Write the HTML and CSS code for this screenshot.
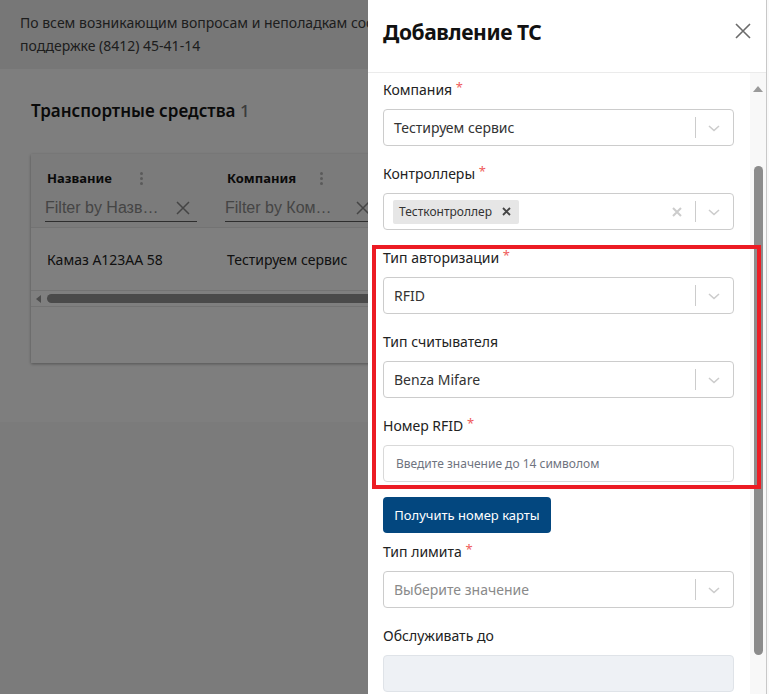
FILE: index.html
```html
<!DOCTYPE html>
<html>
<head>
  <meta charset="utf-8">
  <link rel="stylesheet" href="styles.css">
</head>
<body>
  <div class="page">
    <div class="notice">
      По всем возникающим вопросам и неполадкам сообщайте<br>
      поддержке (8412) 45-41-14
    </div>

    <main class="content">
      <h2 class="page-title">Транспортные средства <span class="count">1</span></h2>

      <div class="grid-card">
        <div class="grid-head">
          <div class="grid-col">
            <div class="col-title"><span>Название</span><span class="col-menu"><i></i><i></i><i></i></span></div>
            <div class="col-filter"><span>Filter by Назв…</span><svg class="filter-clear" width="14" height="14" viewBox="0 0 14 14"><path d="M1 1l12 12M13 1L1 13" stroke="#8a8a8a" stroke-width="1.5" fill="none"/></svg></div>
          </div>
          <div class="grid-col">
            <div class="col-title"><span>Компания</span><span class="col-menu"><i></i><i></i><i></i></span></div>
            <div class="col-filter"><span>Filter by Ком…</span><svg class="filter-clear" width="14" height="14" viewBox="0 0 14 14"><path d="M1 1l12 12M13 1L1 13" stroke="#8a8a8a" stroke-width="1.5" fill="none"/></svg></div>
          </div>
        </div>
        <div class="grid-row">
          <div class="grid-cell">Камаз А123АА 58</div>
          <div class="grid-cell">Тестируем сервис</div>
        </div>
        <div class="grid-hscroll">
          <span class="hscroll-arrow"></span>
          <span class="hscroll-thumb"></span>
        </div>
        <div class="grid-empty"></div>
      </div>
    </main>

    <div class="page-rest"></div>
  </div>

  <div class="backdrop"></div>

  <aside class="drawer">
    <div class="drawer-head">
      <h3>Добавление ТС</h3>
      <svg class="drawer-close" width="16" height="16" viewBox="0 0 16 16">
        <path d="M1 1L15 15M15 1L1 15" stroke="#6b6b6b" stroke-width="1.6" fill="none"/>
      </svg>
    </div>

    <div class="drawer-body">
      <div class="drawer-form">
        <div class="field">
          <label>Компания <span class="req">*</span></label>
          <div class="select">
            <div class="select-value">Тестируем сервис</div>
            <div class="select-indicators">
              <span class="select-sep"></span>
              <svg class="chevron" width="20" height="20" viewBox="0 0 20 20"><path d="M5 8l5 4.5L15 8" stroke="#cccccc" stroke-width="1.6" fill="none"/></svg>
            </div>
          </div>
        </div>

        <div class="field">
          <label>Контроллеры <span class="req">*</span></label>
          <div class="select">
            <div class="select-value">
              <span class="chip">Тестконтроллер <svg class="chip-remove" width="9" height="9" viewBox="0 0 9 9"><path d="M1 1l7 7M8 1L1 8" stroke="#444444" stroke-width="1.8" fill="none"/></svg></span>
            </div>
            <div class="select-indicators">
              <svg class="clear" width="20" height="20" viewBox="0 0 20 20"><path d="M6 6l8 8M14 6l-8 8" stroke="#cccccc" stroke-width="2" fill="none"/></svg>
              <span class="select-sep"></span>
              <svg class="chevron" width="20" height="20" viewBox="0 0 20 20"><path d="M5 8l5 4.5L15 8" stroke="#cccccc" stroke-width="1.6" fill="none"/></svg>
            </div>
          </div>
        </div>

        <div class="field">
          <label>Тип авторизации <span class="req">*</span></label>
          <div class="select">
            <div class="select-value">RFID</div>
            <div class="select-indicators">
              <span class="select-sep"></span>
              <svg class="chevron" width="20" height="20" viewBox="0 0 20 20"><path d="M5 8l5 4.5L15 8" stroke="#cccccc" stroke-width="1.6" fill="none"/></svg>
            </div>
          </div>
        </div>

        <div class="field">
          <label>Тип считывателя</label>
          <div class="select">
            <div class="select-value">Benza Mifare</div>
            <div class="select-indicators">
              <span class="select-sep"></span>
              <svg class="chevron" width="20" height="20" viewBox="0 0 20 20"><path d="M5 8l5 4.5L15 8" stroke="#cccccc" stroke-width="1.6" fill="none"/></svg>
            </div>
          </div>
        </div>

        <div class="field field-tight">
          <label>Номер RFID <span class="req">*</span></label>
          <input class="text-input" type="text" placeholder="Введите значение до 14 символом">
        </div>

        <button class="btn-primary">Получить номер карты</button>

        <div class="field">
          <label>Тип лимита <span class="req">*</span></label>
          <div class="select">
            <div class="select-value placeholder">Выберите значение</div>
            <div class="select-indicators">
              <span class="select-sep"></span>
              <svg class="chevron" width="20" height="20" viewBox="0 0 20 20"><path d="M5 8l5 4.5L15 8" stroke="#cccccc" stroke-width="1.6" fill="none"/></svg>
            </div>
          </div>
        </div>

        <div class="field">
          <label>Обслуживать до</label>
          <input class="text-input" type="text" disabled>
        </div>
      </div>

      <div class="vscroll">
        <span class="vscroll-arrow"></span>
        <span class="vscroll-thumb"></span>
      </div>
    </div>
  </aside>

  <div class="edge-strip"></div>
  <div class="highlight"></div>
</body>
</html>
```

FILE: styles.css
```css
* {
  box-sizing: border-box;
}

body {
  margin: 0;
  width: 769px;
  height: 694px;
  overflow: hidden;
  position: relative;
  font-family: "Noto Sans", "Open Sans", sans-serif;
  background: #f6f6f6;
  color: #222222;
}

/* underlying page */
.page {
  display: flex;
  flex-direction: column;
  height: 694px;
}
.notice {
  height: 69px;
  padding: 11px 20px 0;
  background: #efefef;
  font-size: 14px;
  line-height: 23px;
  color: #3c3c3c;
  white-space: nowrap;
}
.content {
  height: 353px;
  padding: 30px 0 0 31px;
  background: #fdfdfd;
}
.page-title {
  margin: 0;
  font-size: 17px;
  line-height: 24px;
  font-weight: 600;
  color: #141414;
}
.count {
  color: #777777;
  font-weight: 500;
}
.page-rest {
  flex: 1;
  background: #f6f6f6;
}

.grid-card {
  margin-top: 31px;
  width: 760px;
  height: 209px;
  background: #ffffff;
  box-shadow: 0 1px 3px rgba(0, 0, 0, 0.35);
  display: flex;
  flex-direction: column;
}
.grid-head {
  display: flex;
  height: 74px;
  padding: 14px 0 0 14px;
  background: #f6f6f6;
  border-bottom: 1px solid #e6e6e6;
}
.grid-col {
  width: 180px;
  display: flex;
  flex-direction: column;
}
.col-title {
  width: 98px;
  height: 20px;
  padding-left: 2px;
  display: flex;
  justify-content: space-between;
  align-items: center;
  font-size: 13px;
  font-weight: 700;
  color: #141414;
}
.col-menu {
  display: flex;
  flex-direction: column;
  gap: 2px;
}
.col-menu i {
  width: 3px;
  height: 3px;
  border-radius: 50%;
  background: #b5b5b5;
}
.col-filter {
  margin-top: 6px;
  width: 152px;
  height: 28px;
  display: flex;
  justify-content: space-between;
  align-items: center;
  border-bottom: 1px solid #5c5c5c;
  font-family: "Liberation Sans", Arial, sans-serif;
  font-size: 16px;
  color: #8a8a8a;
}
.filter-clear {
  margin-right: 7px;
}
.grid-row {
  display: flex;
  height: 63px;
  align-items: center;
  padding-left: 16px;
  border-bottom: 1px solid #e6e6e6;
}
.grid-cell {
  width: 180px;
  font-size: 14px;
  color: #222222;
}
.grid-hscroll {
  height: 16px;
  display: flex;
  align-items: center;
  padding-left: 5px;
  gap: 6px;
  border-bottom: 1px solid #e6e6e6;
}
.hscroll-arrow {
  width: 0;
  height: 0;
  border-top: 4px solid transparent;
  border-bottom: 4px solid transparent;
  border-right: 5px solid #9a9a9a;
}
.hscroll-thumb {
  flex: 1;
  height: 9px;
  border-radius: 5px;
  background: #949494;
}

.backdrop {
  position: absolute;
  inset: 0;
  background: rgba(0, 0, 0, 0.5);
}

/* drawer */
.drawer {
  position: absolute;
  top: 0;
  left: 368px;
  width: 399px;
  height: 694px;
  background: #ffffff;
  border-right: 1px solid #c8c8c8;
  display: flex;
  flex-direction: column;
}
.drawer-head {
  height: 73px;
  flex-shrink: 0;
  display: flex;
  justify-content: space-between;
  align-items: flex-start;
  padding: 17px 15px 0 15px;
  border-bottom: 1px solid #ebebeb;
}
.drawer-head h3 {
  margin: 0;
  font-size: 21px;
  line-height: 30px;
  font-weight: 700;
  letter-spacing: -0.4px;
  color: #111111;
}
.drawer-close {
  margin-top: 6px;
}
.drawer-body {
  flex: 1;
  display: flex;
  overflow: hidden;
}
.drawer-form {
  flex: 1;
  padding: 7px 16px 0 15px;
}
.field {
  margin-bottom: 18px;
}
.field-tight {
  margin-bottom: 15px;
}
.field label {
  display: block;
  height: 20px;
  font-size: 14px;
  line-height: 20px;
  margin-bottom: 9px;
  color: #222222;
}
.req {
  position: relative;
  top: -3px;
  line-height: 0;
  color: #ef5b5b;
  font-size: 13px;
}
.select {
  height: 37px;
  border: 1px solid #cccccc;
  border-radius: 4px;
  display: flex;
  align-items: center;
}
.select-value {
  flex: 1;
  padding: 0 10px;
  font-size: 14px;
  color: #333333;
}
.select-value.placeholder {
  color: #8a8a8a;
}
.select-indicators {
  display: flex;
  align-items: center;
  height: 100%;
}
.select-sep {
  width: 1px;
  height: 21px;
  background: #cccccc;
}
.chevron {
  margin: 0 9px 0 8px;
}
.clear {
  margin-right: 8px;
}
.chip {
  display: inline-flex;
  align-items: center;
  gap: 10px;
  height: 24px;
  margin-left: -1px;
  padding: 0 8px 0 6px;
  background: #e6e6e6;
  border-radius: 2px;
  font-size: 12px;
  color: #333333;
}
.text-input {
  display: block;
  width: 100%;
  height: 37px;
  border: 1px solid #d9d9d9;
  border-radius: 4px;
  padding: 0 12px;
  font-family: inherit;
  font-size: 12px;
  color: #333333;
  background: #ffffff;
}
.text-input::placeholder {
  color: #6f7480;
}
.text-input:disabled {
  background: #eef1f5;
  border-color: #dfe3e8;
}
.btn-primary {
  display: block;
  width: 168px;
  height: 36px;
  margin-bottom: 9px;
  border: none;
  border-radius: 4px;
  background: #03477f;
  color: #ffffff;
  font-family: inherit;
  font-size: 13px;
  font-weight: 400;
}

.vscroll {
  width: 16px;
  flex-shrink: 0;
  background: #f8f8f8;
  display: flex;
  flex-direction: column;
  align-items: center;
  padding-top: 13px;
}
.vscroll-arrow {
  width: 0;
  height: 0;
  border-left: 5px solid transparent;
  border-right: 5px solid transparent;
  border-bottom: 6px solid #9a9a9a;
}
.vscroll-thumb {
  margin-top: 74px;
  width: 9px;
  height: 489px;
  border-radius: 5px;
  background: #8c8c8c;
}

.edge-strip {
  position: absolute;
  top: 0;
  right: 0;
  width: 2px;
  height: 694px;
  background: #fafafa;
}

/* annotation frame */
.highlight {
  position: absolute;
  left: 372px;
  top: 245px;
  width: 389px;
  height: 244px;
  border: 4px solid #ec1c24;
}
```
